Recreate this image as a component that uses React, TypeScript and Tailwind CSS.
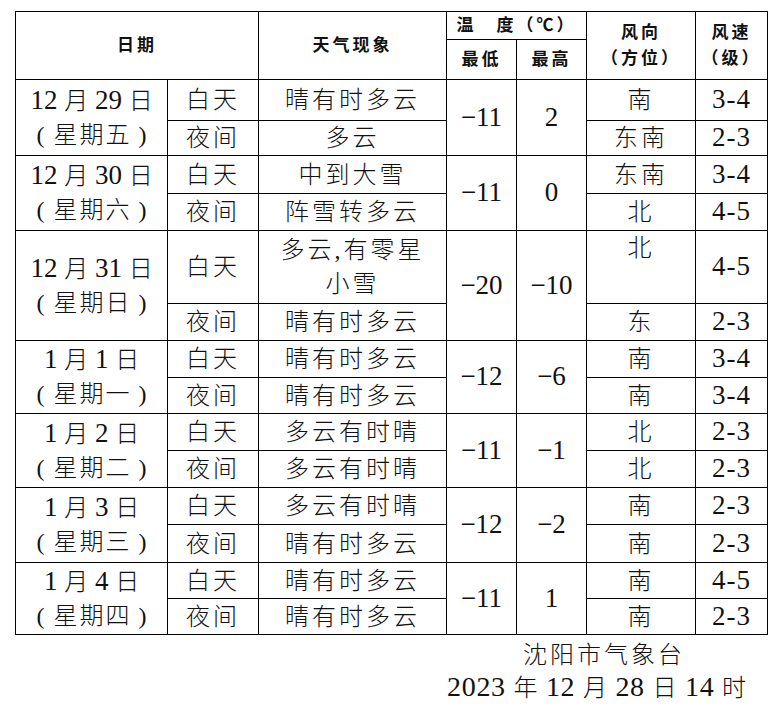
import React from "react";

type Day = {
  date: string;
  week: string;
  dayWx: string[];
  nightWx: string;
  low: string;
  high: string;
  dayDir: string;
  dayDirTop?: boolean;
  daySpd: string;
  nightDir: string;
  nightSpd: string;
  h: [number, number];
};

const days: Day[] = [
  { date: "12 月 29 日", week: "星期五", dayWx: ["晴有时多云"], nightWx: "多云", low: "−11", high: "2", dayDir: "南", daySpd: "3-4", nightDir: "东南", nightSpd: "2-3", h: [41, 35] },
  { date: "12 月 30 日", week: "星期六", dayWx: ["中到大雪"], nightWx: "阵雪转多云", low: "−11", high: "0", dayDir: "东南", daySpd: "3-4", nightDir: "北", nightSpd: "4-5", h: [38, 37] },
  { date: "12 月 31 日", week: "星期日", dayWx: ["多云,有零星", "小雪"], nightWx: "晴有时多云", low: "−20", high: "−10", dayDir: "北", dayDirTop: true, daySpd: "4-5", nightDir: "东", nightSpd: "2-3", h: [73, 37] },
  { date: "1 月 1 日", week: "星期一", dayWx: ["晴有时多云"], nightWx: "晴有时多云", low: "−12", high: "−6", dayDir: "南", daySpd: "3-4", nightDir: "南", nightSpd: "3-4", h: [37, 36] },
  { date: "1 月 2 日", week: "星期二", dayWx: ["多云有时晴"], nightWx: "多云有时晴", low: "−11", high: "−1", dayDir: "北", daySpd: "2-3", nightDir: "北", nightSpd: "2-3", h: [37, 37] },
  { date: "1 月 3 日", week: "星期三", dayWx: ["多云有时晴"], nightWx: "晴有时多云", low: "−12", high: "−2", dayDir: "南", daySpd: "2-3", nightDir: "南", nightSpd: "2-3", h: [37, 38] },
  { date: "1 月 4 日", week: "星期四", dayWx: ["晴有时多云"], nightWx: "晴有时多云", low: "−11", high: "1", dayDir: "南", daySpd: "4-5", nightDir: "南", nightSpd: "2-3", h: [36, 36] },
];

// digits/latin runs get the larger Times-like size, CJK stays at 24px
function Mixed({ text, big = false }: { text: string; big?: boolean }) {
  const parts = text.split(/([0-9−\-\s]+)/).filter((p) => p !== "");
  return (
    <>
      {parts.map((p, i) =>
        /^[0-9−\-\s]+$/.test(p) ? (
          <span key={i} className={big ? "text-[28px] leading-none" : "text-[27px] leading-none"}>
            {p}
          </span>
        ) : (
          <span key={i}>{p}</span>
        )
      )}
    </>
  );
}

const cell = "border border-black p-0 text-center align-middle";
const head =
  "border border-black p-0 text-center align-middle text-[17px] font-bold tracking-[3px] leading-[26px]";

export default function App() {
  return (
    <div
      className="min-h-screen w-[783px] bg-white text-[#111] pl-[15px] pt-[11px]"
      style={{ fontFamily: '"Liberation Serif", "Noto Sans CJK SC", serif' }}
    >
      <table className="w-[752px] table-fixed border-collapse text-[24px] leading-[34px] font-light">
        <colgroup>
          <col className="w-[152px]" />
          <col className="w-[91px]" />
          <col className="w-[188px]" />
          <col className="w-[70px]" />
          <col className="w-[70px]" />
          <col className="w-[109px]" />
          <col className="w-[72px]" />
        </colgroup>
        <tbody>
          <tr className="h-[28px]">
            <td colSpan={2} rowSpan={2} className={head}>日期</td>
            <td rowSpan={2} className={head}>天气现象</td>
            <td colSpan={2} className={head}>温　度（℃）</td>
            <td rowSpan={2} className={head}>
              <div>风向</div>
              <div>（方位）</div>
            </td>
            <td rowSpan={2} className={head}>
              <div>风速</div>
              <div>（级）</div>
            </td>
          </tr>
          <tr className="h-[40px]">
            <td className={head}>最低</td>
            <td className={head}>最高</td>
          </tr>
          {days.map((d) => (
            <React.Fragment key={d.date}>
              <tr style={{ height: d.h[0] }}>
                <td rowSpan={2} className={cell}>
                  <div>
                    <Mixed text={d.date} />
                  </div>
                  <div className="flex justify-center">
                    <span className="w-[17px] text-left">(</span>
                    <span className="tracking-[2px] mr-[-2px]">{d.week}</span>
                    <span className="w-[17px] text-right">)</span>
                  </div>
                </td>
                <td className={`${cell} tracking-[3px]`}>白天</td>
                <td className={`${cell} tracking-[3px]`}>
                  {d.dayWx.map((t) => (
                    <div key={t}>{t}</div>
                  ))}
                </td>
                <td rowSpan={2} className={cell}>
                  <Mixed text={d.low} />
                </td>
                <td rowSpan={2} className={cell}>
                  <Mixed text={d.high} />
                </td>
                <td className={`${cell} tracking-[3px] ${d.dayDirTop ? "align-top" : ""}`}>{d.dayDir}</td>
                <td className={`${cell} tracking-[1px]`}>
                  <Mixed text={d.daySpd} />
                </td>
              </tr>
              <tr style={{ height: d.h[1] }}>
                <td className={`${cell} tracking-[3px]`}>夜间</td>
                <td className={`${cell} tracking-[3px]`}>{d.nightWx}</td>
                <td className={`${cell} tracking-[3px]`}>{d.nightDir}</td>
                <td className={`${cell} tracking-[1px]`}>
                  <Mixed text={d.nightSpd} />
                </td>
              </tr>
            </React.Fragment>
          ))}
        </tbody>
      </table>
      <div className="mt-[4px] text-[24px] leading-[33px] font-light">
        <div className="ml-[508px] tracking-[3px]">沈阳市气象台</div>
        <div className="ml-[432px] tracking-[0.7px]">
          <Mixed text="2023 年 12 月 28 日 14 时" big />
        </div>
      </div>
    </div>
  );
}
